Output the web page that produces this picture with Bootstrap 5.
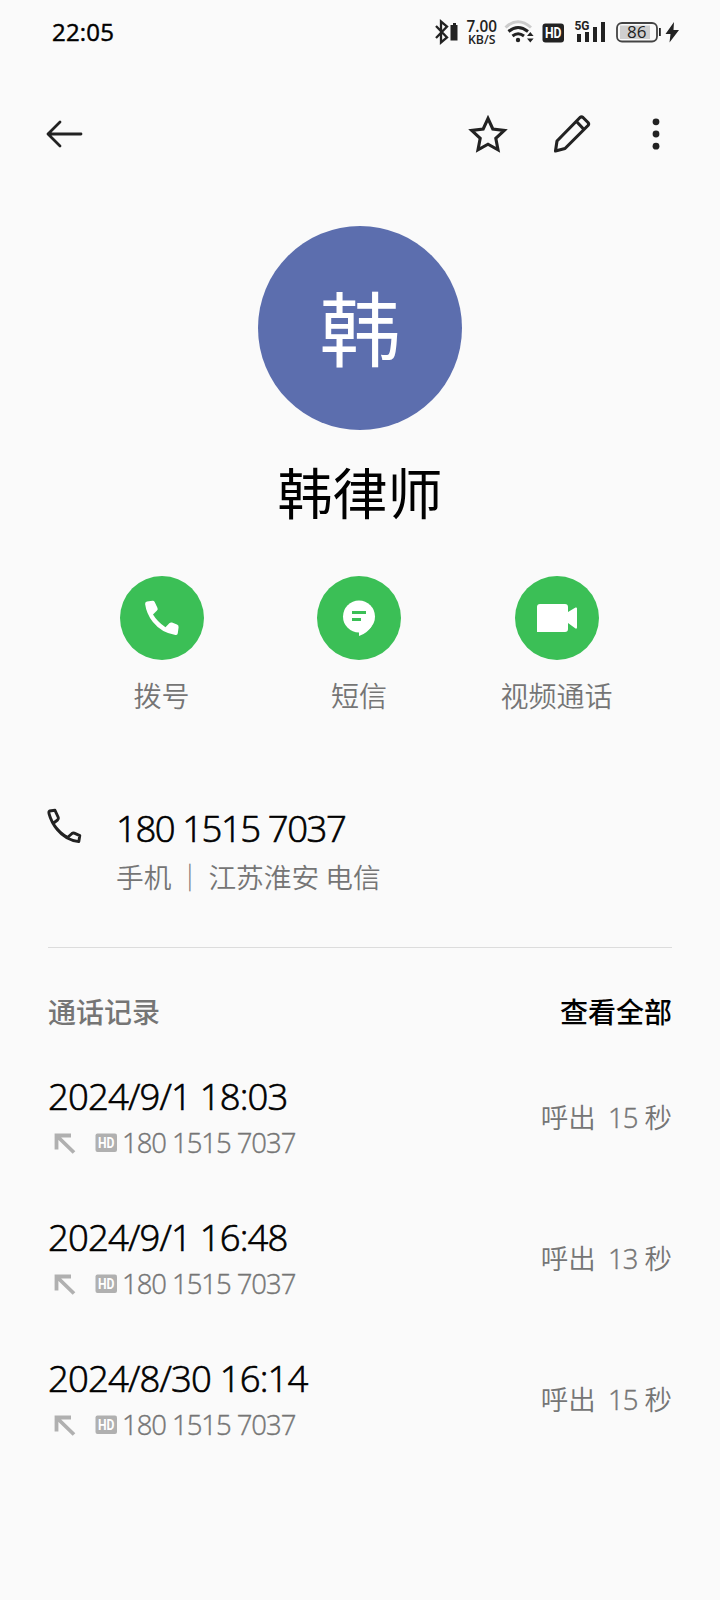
<!DOCTYPE html>
<html lang="zh-CN">
<head>
<meta charset="utf-8">
<meta name="viewport" content="width=device-width, initial-scale=1">
<title>韩律师</title>
<link href="https://cdn.jsdelivr.net/npm/bootstrap@5.3.0/dist/css/bootstrap.min.css" rel="stylesheet">
<style>
body{background:#fafafa;color:#000;font-family:"Open Sans","Noto Sans CJK SC",sans-serif;min-height:1600px;overflow-x:hidden}
svg{display:block;flex:none}
.cjk{font-family:"Noto Sans CJK SC",sans-serif}
.soft{color:#757575;font-weight:350}
.status-bar{height:64px;padding:0 40px 0 52px}
.clock{font:500 24px/32px "Open Sans",sans-serif;letter-spacing:.2px;-webkit-text-stroke:.45px #000}
.toolbar{height:140px;padding:0 44px 0 46px}
.avatar{width:204px;height:204px;margin-top:22px;padding-bottom:8px;background:#5c6eae;font-size:81px;line-height:1}
.person{font-size:55px;line-height:121px;height:128px;font-weight:400}
.actions{margin-top:18px;padding-left:63px;padding-right:65px}
.action-item{width:197px}
.action-disc{width:84px;height:84px;background:#3bbf56}
.action-label{font-size:28px;line-height:70px;height:72px}
.phone-row{margin-top:73px;padding:0 48px 0 46px}
.phone-text{margin-left:33px}
.num-lg{font-size:36.500px;font-weight:350;line-height:47px;height:48px;letter-spacing:-.85px;white-space:pre;-webkit-text-stroke:.65px #000}
.phone-text .num-lg{letter-spacing:-1.450px}
.num-sm{font-size:27.500px;line-height:44px;letter-spacing:-1.050px;-webkit-text-stroke:.4px #757575}
.place{font-size:27.700px;line-height:46px;height:48px;white-space:pre}
.place-sep{width:37px}
.rule{height:1px;background:#dcdcdc;margin:46px 48px 0}
.log-head{margin:40px 48px 37px;font-size:28px;line-height:47px;height:48px;font-weight:500}
.log-row{margin:0 48px 49px;height:92px}
.result{font-size:27.500px;line-height:44px;margin-bottom:4px;white-space:pre}
.secs{font-family:"Open Sans",sans-serif;letter-spacing:-1px;-webkit-text-stroke:.4px #757575;margin-right:1px}
</style>
</head>
<body>
<header class="status-bar d-flex align-items-center justify-content-between">
  <span class="clock">22:05</span>
  <svg width="250" height="34" viewBox="430 15 250 34" fill="#222" stroke="none">
    <path d="M436 26l11 11.500-6 5v-21l6 5L436 38" fill="none" stroke="#222" stroke-width="2.300"/>
    <path d="M453 23h3v2h1.500v15.500h-7V25h2.500z"/>
    <text x="466.500" y="31.500" font-family="Open Sans" font-size="15.500" font-weight="600" textLength="30.500" lengthAdjust="spacingAndGlyphs">7.00</text>
    <text x="468" y="43.500" font-family="Open Sans" font-size="12.500" font-weight="600" textLength="27.500" lengthAdjust="spacingAndGlyphs">KB/S</text>
    <g fill="none" stroke="#222" stroke-width="3">
      <path d="M505.500 27.500Q518 16 531 27.500" stroke="#ccc"/>
      <path d="M508.500 31.500Q518 23.500 528 31.500"/>
      <path d="M512.500 36Q518 31.500 524 36"/>
    </g>
    <circle cx="518" cy="40" r="2.200"/>
    <path d="M527 36l3.300-4 3.300 4zM527 38.500h6.600l-3.300 4z"/>
    <rect x="542.500" y="23.500" width="21.500" height="19" rx="3"/>
    <text x="545" y="38" fill="#fff" font-family="Roboto" font-weight="700" font-size="14" textLength="16.500" lengthAdjust="spacingAndGlyphs">HD</text>
    <text x="574.500" y="30" font-family="Roboto" font-weight="700" font-size="12.500" textLength="15" lengthAdjust="spacingAndGlyphs">5G</text>
    <path d="M577 34h4v8h-4zM585 32h4v10h-4zM593 27h4v15h-4zM601 22h4v20h-4z"/>
    <rect x="617" y="23" width="40" height="18.500" rx="5" fill="none" stroke="#444" stroke-width="1.800"/>
    <path d="M620 25.500h30V39h-30z" fill="#cfcfcf"/>
    <path d="M659 28h1.800v8H659z"/>
    <text x="627" y="38" font-family="Open Sans" font-size="15.500" textLength="19.500" lengthAdjust="spacingAndGlyphs">86</text>
    <path d="M674 22l-8.500 12h5l-1 8.500L679 30h-5.500z"/>
  </svg>
</header>

<nav class="toolbar d-flex align-items-center">
  <svg class="me-auto" width="38" height="40" viewBox="46 114 38 40" fill="none" stroke="#222" stroke-width="2.800" stroke-linecap="round" stroke-linejoin="round"><path d="M60 122L48 134l12 12M48 134h33"/></svg>
  <svg width="44" height="44" viewBox="466 112 44 44" fill="none" stroke="#222" stroke-width="3.100"><path d="M488 118.500l4.800 10.500 11.500 1.400-8.500 7.900 2.200 11.500-10-5.600-10 5.600 2.200-11.500-8.500-7.900 11.500-1.400z"/></svg>
  <svg width="44" height="44" viewBox="550 112 44 44" fill="none" stroke="#222" stroke-width="3.100" stroke-linejoin="round" style="margin-left:40px"><path d="M555.500 151l1.500-10 23-23.500q1.500-1.200 3 0l5 5q1.300 1.500 0 3L565 148.500zM576.500 121.500l7.500 8"/></svg>
  <svg width="40" height="44" viewBox="636 112 40 44" fill="#222" style="margin-left:42px"><circle cx="656" cy="121.800" r="3.400"/><circle cx="656" cy="134" r="3.400"/><circle cx="656" cy="146.200" r="3.400"/></svg>
</nav>

<main>
  <div class="avatar cjk rounded-circle mx-auto text-white d-flex align-items-center justify-content-center">韩</div>
  <h1 class="person cjk text-center m-0">韩律师</h1>

  <div class="actions d-flex justify-content-between">
    <div class="action-item d-flex flex-column align-items-center">
      <div class="action-disc rounded-circle d-flex align-items-center justify-content-center">
        <svg width="84" height="84" viewBox="120 576 84 84" fill="#fff"><path d="M147 601.500l5.500-.7q1.500-.2 2.200 1.200l2.800 6q.6 1.500-.5 2.600l-4 4q4.500 7.500 12.500 12.700l3.800-4q1.200-1.200 2.700-.7l5 2q1.800.8 1.600 2.600l-.8 6q-.3 2-2.400 1.900-14-2.300-22.500-13-6.500-8.500-7.800-18.200 0-2 1.900-2.400z"/></svg>
      </div>
      <span class="action-label cjk soft">拨号</span>
    </div>
    <div class="action-item d-flex flex-column align-items-center">
      <div class="action-disc rounded-circle d-flex align-items-center justify-content-center">
        <svg width="84" height="84" viewBox="317 576 84 84"><circle cx="359" cy="616.500" r="16" fill="#fff"/><path fill="#fff" d="M359 630v6q8-2.500 13-10z"/><path fill="#3bbf56" d="M352 611h14v3h-14zM352 618h9v3h-9z"/></svg>
      </div>
      <span class="action-label cjk soft">短信</span>
    </div>
    <div class="action-item d-flex flex-column align-items-center">
      <div class="action-disc rounded-circle d-flex align-items-center justify-content-center">
        <svg width="84" height="84" viewBox="515 576 84 84" fill="#fff"><path d="M540 604h25q3 0 3 3v5l7.500-4.500q1.500-.5 1.500 1v19q0 1.500-1.500 1L568 623v6q0 3-3 3h-28v-25q0-3 3-3z"/></svg>
      </div>
      <span class="action-label cjk soft">视频通话</span>
    </div>
  </div>

  <section class="phone-row d-flex">
    <svg width="37" height="44" viewBox="46 805 37 44" fill="none" stroke="#222" stroke-width="2.900" stroke-linejoin="round"><path d="M49.500 811l5.500-.7 3.300 7.200q.5 1.500-.8 2.500l-4.500 3.500q6 9 14.500 14l4.500-4q1-.8 2.300-.4l5.500 2.500-1 6q-13-1.500-21.500-12-6-7.500-8.200-15.800-.6-2.300.4-2.800zM52.500 822.500l2 3M66 836.500l3 2"/></svg>
    <div class="phone-text">
      <div class="num-lg">180 1515 7037</div>
      <div class="place cjk soft d-flex">手机<span class="place-sep d-flex justify-content-center">｜</span>江苏淮安 电信</div>
    </div>
  </section>
  <div class="rule"></div>

  <div class="log-head cjk d-flex justify-content-between"><span style="color:#757575">通话记录</span><span>查看全部</span></div>

  <article class="log-row d-flex align-items-center justify-content-between">
    <div>
      <div class="num-lg">2024/9/1 18:03</div>
      <div class="d-flex align-items-center">
        <svg width="74" height="24" viewBox="0 0 74 24"><path d="M8.500 18.500V4.500H23M10 6l16 15.500" fill="none" stroke="#b0b0b0" stroke-width="3.800"/><rect x="47.500" y="2.500" width="21.500" height="18.500" rx="2" fill="#b0b0b0"/><text x="50" y="17" fill="#fff" font-family="Roboto" font-weight="700" font-size="14" textLength="16.500" lengthAdjust="spacingAndGlyphs">HD</text></svg>
        <span class="num-sm soft">180 1515 7037</span>
      </div>
    </div>
    <span class="result cjk soft">呼出  <span class="secs">15</span> 秒</span>
  </article>
  <article class="log-row d-flex align-items-center justify-content-between">
    <div>
      <div class="num-lg">2024/9/1 16:48</div>
      <div class="d-flex align-items-center">
        <svg width="74" height="24" viewBox="0 0 74 24"><path d="M8.500 18.500V4.500H23M10 6l16 15.500" fill="none" stroke="#b0b0b0" stroke-width="3.800"/><rect x="47.500" y="2.500" width="21.500" height="18.500" rx="2" fill="#b0b0b0"/><text x="50" y="17" fill="#fff" font-family="Roboto" font-weight="700" font-size="14" textLength="16.500" lengthAdjust="spacingAndGlyphs">HD</text></svg>
        <span class="num-sm soft">180 1515 7037</span>
      </div>
    </div>
    <span class="result cjk soft">呼出  <span class="secs">13</span> 秒</span>
  </article>
  <article class="log-row d-flex align-items-center justify-content-between">
    <div>
      <div class="num-lg">2024/8/30 16:14</div>
      <div class="d-flex align-items-center">
        <svg width="74" height="24" viewBox="0 0 74 24"><path d="M8.500 18.500V4.500H23M10 6l16 15.500" fill="none" stroke="#b0b0b0" stroke-width="3.800"/><rect x="47.500" y="2.500" width="21.500" height="18.500" rx="2" fill="#b0b0b0"/><text x="50" y="17" fill="#fff" font-family="Roboto" font-weight="700" font-size="14" textLength="16.500" lengthAdjust="spacingAndGlyphs">HD</text></svg>
        <span class="num-sm soft">180 1515 7037</span>
      </div>
    </div>
    <span class="result cjk soft">呼出  <span class="secs">15</span> 秒</span>
  </article>
</main>
<script src="https://cdn.jsdelivr.net/npm/bootstrap@5.3.0/dist/js/bootstrap.bundle.min.js"></script>
</body>
</html>
